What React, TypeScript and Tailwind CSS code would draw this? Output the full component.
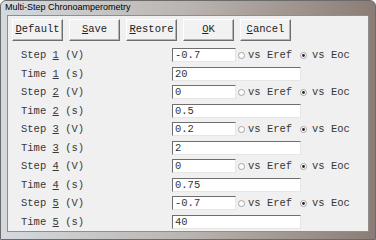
const mono = { fontFamily: '"Liberation Mono", "Courier New", monospace' };

const buttons = [
  { key: "D", rest: "efault" },
  { key: "S", rest: "ave" },
  { key: "R", rest: "estore" },
  { key: "O", rest: "K" },
  { key: "C", rest: "ancel" },
];

const steps = [
  { n: 1, v: "-0.7", t: "20" },
  { n: 2, v: "0", t: "0.5" },
  { n: 3, v: "0.2", t: "2" },
  { n: 4, v: "0", t: "0.75" },
  { n: 5, v: "-0.7", t: "40" },
];

function Radio({ checked = false }: { checked?: boolean }) {
  return (
    <svg width="7" height="7" viewBox="0 0 7 7" className="shrink-0">
      <circle cx="3.5" cy="3.5" r="3" fill="#fff" stroke="#9a9a9a" strokeWidth="0.9" />
      {checked && <circle cx="3.5" cy="3.5" r="1.4" fill="#222" />}
    </svg>
  );
}

function Field({ value, wide }: { value: string; wide?: boolean }) {
  return (
    <div
      className={`${wide ? "w-[129px]" : "w-[64px]"} h-[14px] bg-white border border-t-[#6e6e6e] border-l-[#6e6e6e] border-b-[#e6e6e6] border-r-[#e6e6e6] flex items-center pl-[2px] text-[10.5px] text-[#333] leading-none`}
    >
      {value}
    </div>
  );
}

function Row({ label, n, unit, value, step }: { label: string; n: number; unit: string; value: string; step?: boolean }) {
  return (
    <div className="h-[18.5px] flex items-center">
      <div className="w-[160px] pl-[9px] text-[10.5px] text-[#383838] leading-none whitespace-pre">
        {label} <span className="underline">{n}</span> ({unit})
      </div>
      <Field value={value} wide={!step} />
      {step && (
        <div className="flex items-center text-[10.5px] text-[#383838] leading-none">
          <span className="ml-[2px]"><Radio /></span>
          <span className="ml-[3px] w-[52px]">vs Eref</span>
          <Radio checked />
          <span className="ml-[5px]">vs Eoc</span>
        </div>
      )}
    </div>
  );
}

export default function App() {
  return (
    <div className="w-[376px] h-[240px] flex flex-col bg-gradient-to-r from-[#d5dadf] via-[#bab4b0] to-[#8b7d76] border border-[#6b6b6b] rounded-t-[6px] px-[6px] pb-[7px]">
      <div
        className="h-[16px] -mx-[6px] flex items-center pl-[4px] text-[9px] text-black"
        style={{ fontFamily: '"Liberation Sans", Arial, sans-serif' }}
      >
        Multi-Step Chronoamperometry
      </div>
      <div className="flex-1 bg-[#f0f0f0] border border-[#8e8e8e] flex flex-col pt-[3px] pl-[4px]" style={mono}>
        <div className="flex gap-[6px]">
          {buttons.map((b) => (
            <div
              key={b.key}
              className="w-[51px] h-[22px] bg-[#f2f2f2] border border-t-white border-l-white border-r-[#6d6d6d] border-b-[#6d6d6d] shadow-[inset_-1px_-1px_0_#b4b4b4] flex items-center justify-center text-[10.5px] text-[#222] leading-none"
            >
              <span className="underline">{b.key}</span>
              {b.rest}
            </div>
          ))}
        </div>
        <div className="mt-[5.5px] flex flex-col">
          {steps.map((s) => (
            <div key={s.n}>
              <Row label="Step" n={s.n} unit="V" value={s.v} step />
              <Row label="Time" n={s.n} unit="s" value={s.t} />
            </div>
          ))}
        </div>
      </div>
    </div>
  );
}
